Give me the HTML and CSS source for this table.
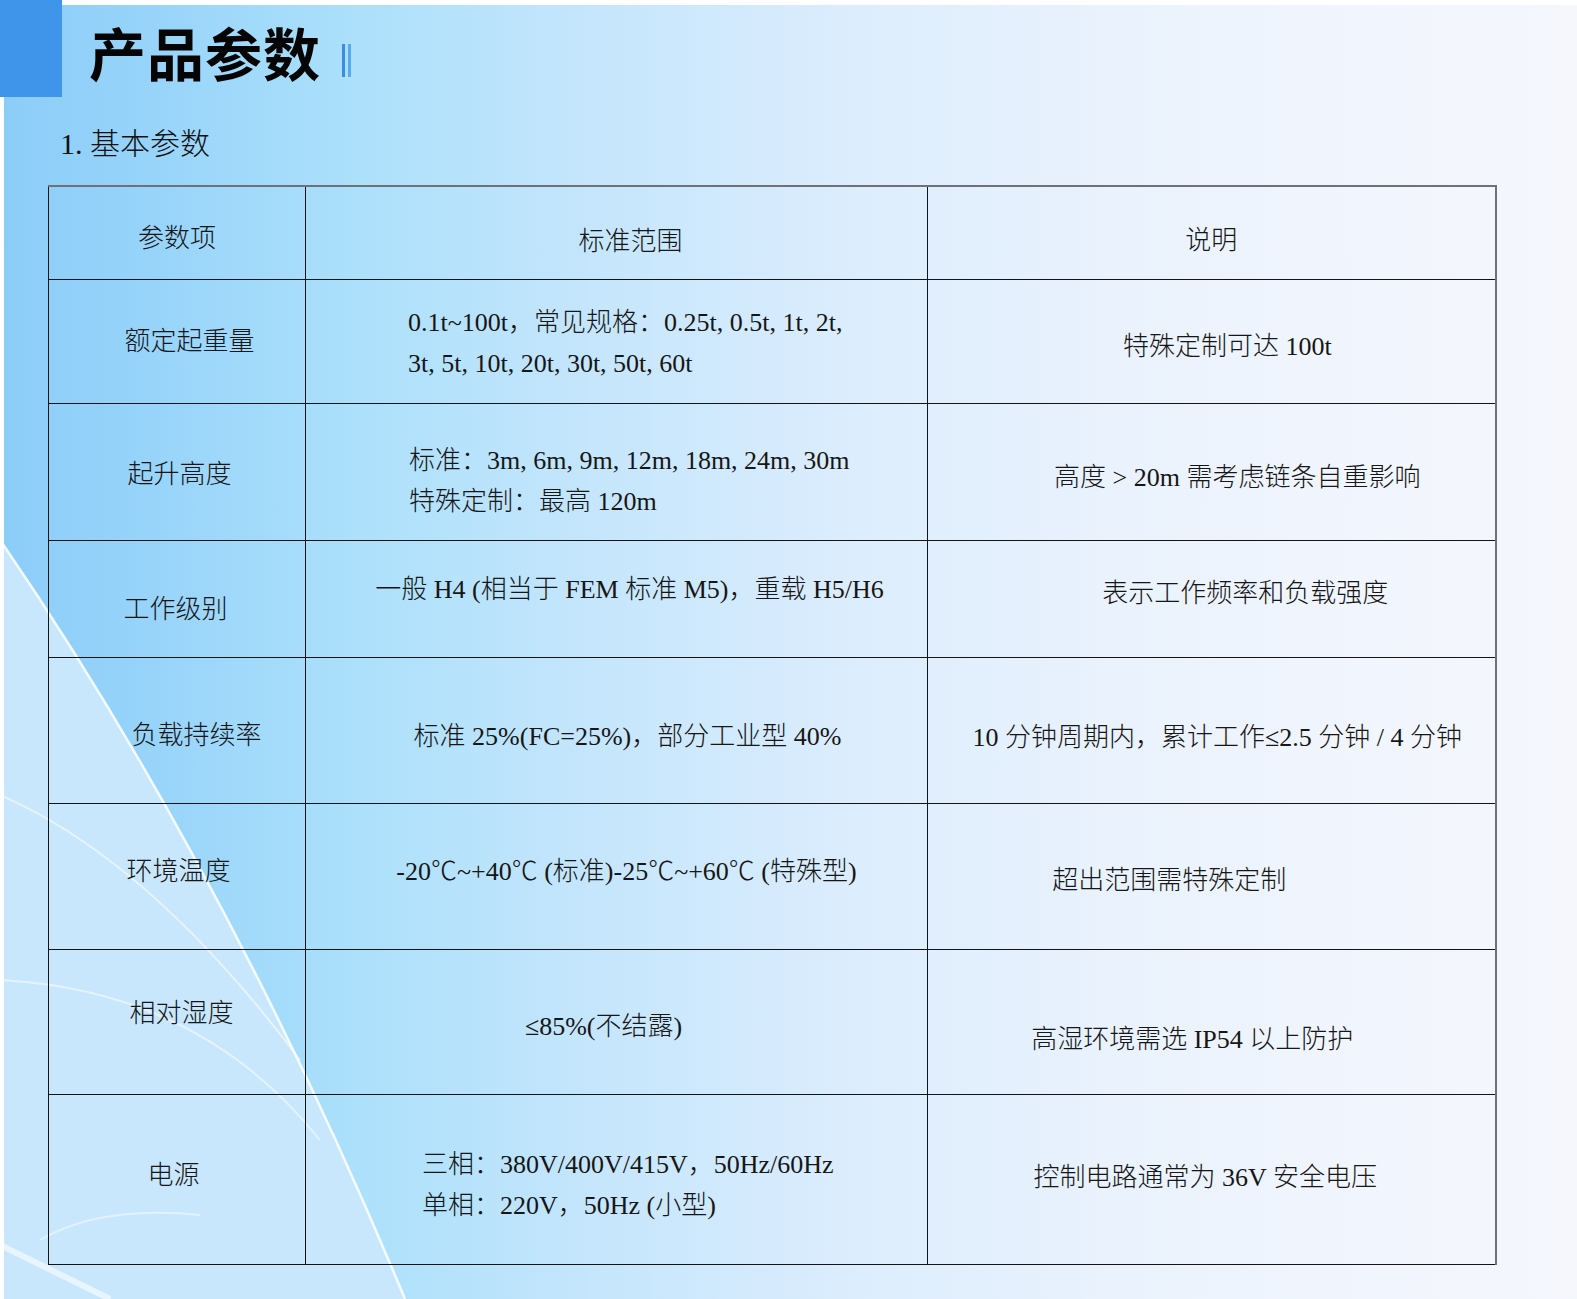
FILE: index.html
```html
<!DOCTYPE html>
<html lang="zh-CN">
<head>
<meta charset="utf-8">
<title>产品参数</title>
<link rel="stylesheet" href="styles.css">
</head>
<body>
<div class="page">
  <div class="corner"></div>
  <div class="slide">
    <svg class="bg-art" viewBox="4 5 1573 1294" width="1573" height="1294" aria-hidden="true">
      <path d="M0,540 C110,700 260,950 405,1299 L0,1299 Z" fill="#c9e7fc"/>
      <path d="M0,540 C110,700 260,950 405,1299" fill="none" stroke="#ffffff" stroke-opacity="0.85" stroke-width="2.5"/>
      <path d="M0,795 Q150,860 300,1060" fill="none" stroke="#ffffff" stroke-opacity="0.55" stroke-width="2"/>
      <path d="M0,980 Q200,990 320,1140" fill="none" stroke="#ffffff" stroke-opacity="0.5" stroke-width="2"/>
      <path d="M40,1240 Q100,1205 200,1215" fill="none" stroke="#ffffff" stroke-opacity="0.45" stroke-width="2"/>
      <path d="M0,1245 L110,1299" fill="none" stroke="#ffffff" stroke-opacity="0.6" stroke-width="6"/>
    </svg>

    <header class="head">
      <h1 class="title">产品参数</h1>
      <span class="bars"><i class="bar bar-a"></i><i class="bar bar-b"></i></span>
    </header>

    <h2 class="sub">1. 基本参数</h2>

    <table class="spec">
      <colgroup>
        <col class="col-a">
        <col class="col-b">
        <col class="col-c">
      </colgroup>
      <tbody>
        <tr class="r0">
          <td>参数项</td>
          <td>标准范围</td>
          <td>说明</td>
        </tr>
        <tr class="r1">
          <td>额定起重量</td>
          <td class="left">0.1t~100t，常见规格：0.25t, 0.5t, 1t, 2t,<br>3t, 5t, 10t, 20t, 30t, 50t, 60t</td>
          <td>特殊定制可达 100t</td>
        </tr>
        <tr class="r2">
          <td>起升高度</td>
          <td class="left">标准：3m, 6m, 9m, 12m, 18m, 24m, 30m<br>特殊定制：最高 120m</td>
          <td>高度 &gt; 20m 需考虑链条自重影响</td>
        </tr>
        <tr class="r3">
          <td>工作级别</td>
          <td>一般 H4 (相当于 FEM 标准 M5)，重载 H5/H6</td>
          <td>表示工作频率和负载强度</td>
        </tr>
        <tr class="r4">
          <td>负载持续率</td>
          <td>标准 25%(FC=25%)，部分工业型 40%</td>
          <td>10 分钟周期内，累计工作≤2.5 分钟 / 4 分钟</td>
        </tr>
        <tr class="r5">
          <td>环境温度</td>
          <td>-20℃~+40℃ (标准)-25℃~+60℃ (特殊型)</td>
          <td>超出范围需特殊定制</td>
        </tr>
        <tr class="r6">
          <td>相对湿度</td>
          <td>≤85%(不结露)</td>
          <td>高湿环境需选 IP54 以上防护</td>
        </tr>
        <tr class="r7">
          <td>电源</td>
          <td class="left">三相：380V/400V/415V，50Hz/60Hz<br>单相：220V，50Hz (小型)</td>
          <td>控制电路通常为 36V 安全电压</td>
        </tr>
      </tbody>
    </table>
  </div>
</div>
</body>
</html>
```

FILE: styles.css
```css
html, body {
  margin: 0;
  padding: 0;
  background: #ffffff;
}

.page {
  position: relative;
  width: 1577px;
  height: 1299px;
  overflow: hidden;
  background: #ffffff;
  font-family: "Liberation Serif", "Noto Sans CJK SC", serif;
  color: #161616;
}

.corner {
  position: absolute;
  left: 0;
  top: 0;
  width: 62px;
  height: 97px;
  background: #3f95ea;
  z-index: 2;
}

.slide {
  position: relative;
  z-index: 0;
  margin: 5px 0 0 4px;
  width: 1573px;
  height: 1294px;
  background: linear-gradient(90deg,
    #8ccdf8 0px,
    #98d4fa 150px,
    #ace0fb 350px,
    #c6e6fc 600px,
    #dcedfd 850px,
    #e9f2fd 1100px,
    #f1f5fd 1350px,
    #f5f7fd 1573px);
}

.bg-art {
  position: absolute;
  left: 0;
  top: 0;
  z-index: -1;
  display: block;
}

/* ---------- header ---------- */
.head {
  display: flex;
  align-items: center;
  height: 92px;
  padding-left: 85px;
}

.title {
  margin: 0;
  font-family: "Noto Sans CJK SC", sans-serif;
  font-weight: 700;
  font-size: 57px;
  line-height: 57px;
  letter-spacing: 1px;
  color: #050505;
}

.bars {
  display: flex;
  gap: 3px;
  align-self: flex-end;
  margin: 0 0 20px 21px;
}

.bar {
  display: block;
  width: 3px;
  height: 33px;
}

.bar-a { background: #3a8de4; }
.bar-b { background: #5aa8ee; }

.sub {
  margin: 27px 0 0;
  padding-left: 56px;
  font-family: "Liberation Serif", "Noto Sans CJK SC", serif;
  font-weight: 300;
  font-size: 30px;
  line-height: 40px;
  color: #111111;
}

/* ---------- table ---------- */
.spec {
  margin: 21px 0 0 44px;
  width: 1447px;
  table-layout: fixed;
  border-collapse: collapse;
}

.col-a { width: 257px; }
.col-b { width: 622px; }
.col-c { width: 568px; }

.spec td {
  border: 1px solid #141414;
  padding: 0;
  text-align: center;
  vertical-align: middle;
  white-space: nowrap;
  font-family: "Liberation Serif", "Noto Sans CJK SC", serif;
  font-weight: 300;
  font-size: 26px;
  line-height: 41px;
  color: #161616;
}

.spec tr.r0 td { border-top: 2px solid #707078; }
.spec td:last-child { border-right: 2px solid #707078; }

.spec td.left { text-align: left; }

.spec tr.r0 { height: 93px; }
.spec tr.r1 { height: 124px; }
.spec tr.r2 { height: 137px; }
.spec tr.r3 { height: 117px; }
.spec tr.r4 { height: 146px; }
.spec tr.r5 { height: 146px; }
.spec tr.r6 { height: 145px; }
.spec tr.r7 { height: 170px; }

/* per-cell text placement, as laid out on the slide */
.r0 td:nth-child(1) { padding-top: 12px; }
.r0 td:nth-child(2) { padding: 18px 0 0 28px; }
.r0 td:nth-child(3) { padding-top: 16px; }

.r1 td:nth-child(1) { padding-left: 25px; }
.r1 td:nth-child(2) { padding: 3px 0 0 102px; }
.r1 td:nth-child(3) { padding: 10px 0 0 32px; }

.r2 td:nth-child(1) { padding: 5px 0 0 5px; }
.r2 td:nth-child(2) { padding: 18px 0 0 103px; }
.r2 td:nth-child(3) { padding: 11px 0 0 52px; }

.r3 td:nth-child(1) { padding: 21px 3px 0 0; }
.r3 td:nth-child(2) { padding: 0 0 19px 26px; }
.r3 td:nth-child(3) { padding: 0 0 11px 68px; }

.r4 td:nth-child(1) { padding: 10px 0 0 39px; }
.r4 td:nth-child(2) { padding: 12px 0 0 22px; }
.r4 td:nth-child(3) { padding: 14px 0 0 12px; }

.r5 td:nth-child(1) { padding: 0 0 10px 3px; }
.r5 td:nth-child(2) { padding: 0 0 10px 20px; }
.r5 td:nth-child(3) { padding: 8px 84px 0 0; }

.r6 td:nth-child(1) { padding: 0 0 17px 9px; }
.r6 td:nth-child(2) { padding: 9px 26px 0 0; }
.r6 td:nth-child(3) { padding: 35px 38px 0 0; }

.r7 td:nth-child(1) { padding: 0 7px 8px 0; }
.r7 td:nth-child(2) { padding: 12px 0 0 116px; }
.r7 td:nth-child(3) { padding: 0 12px 4px 0; }
```
